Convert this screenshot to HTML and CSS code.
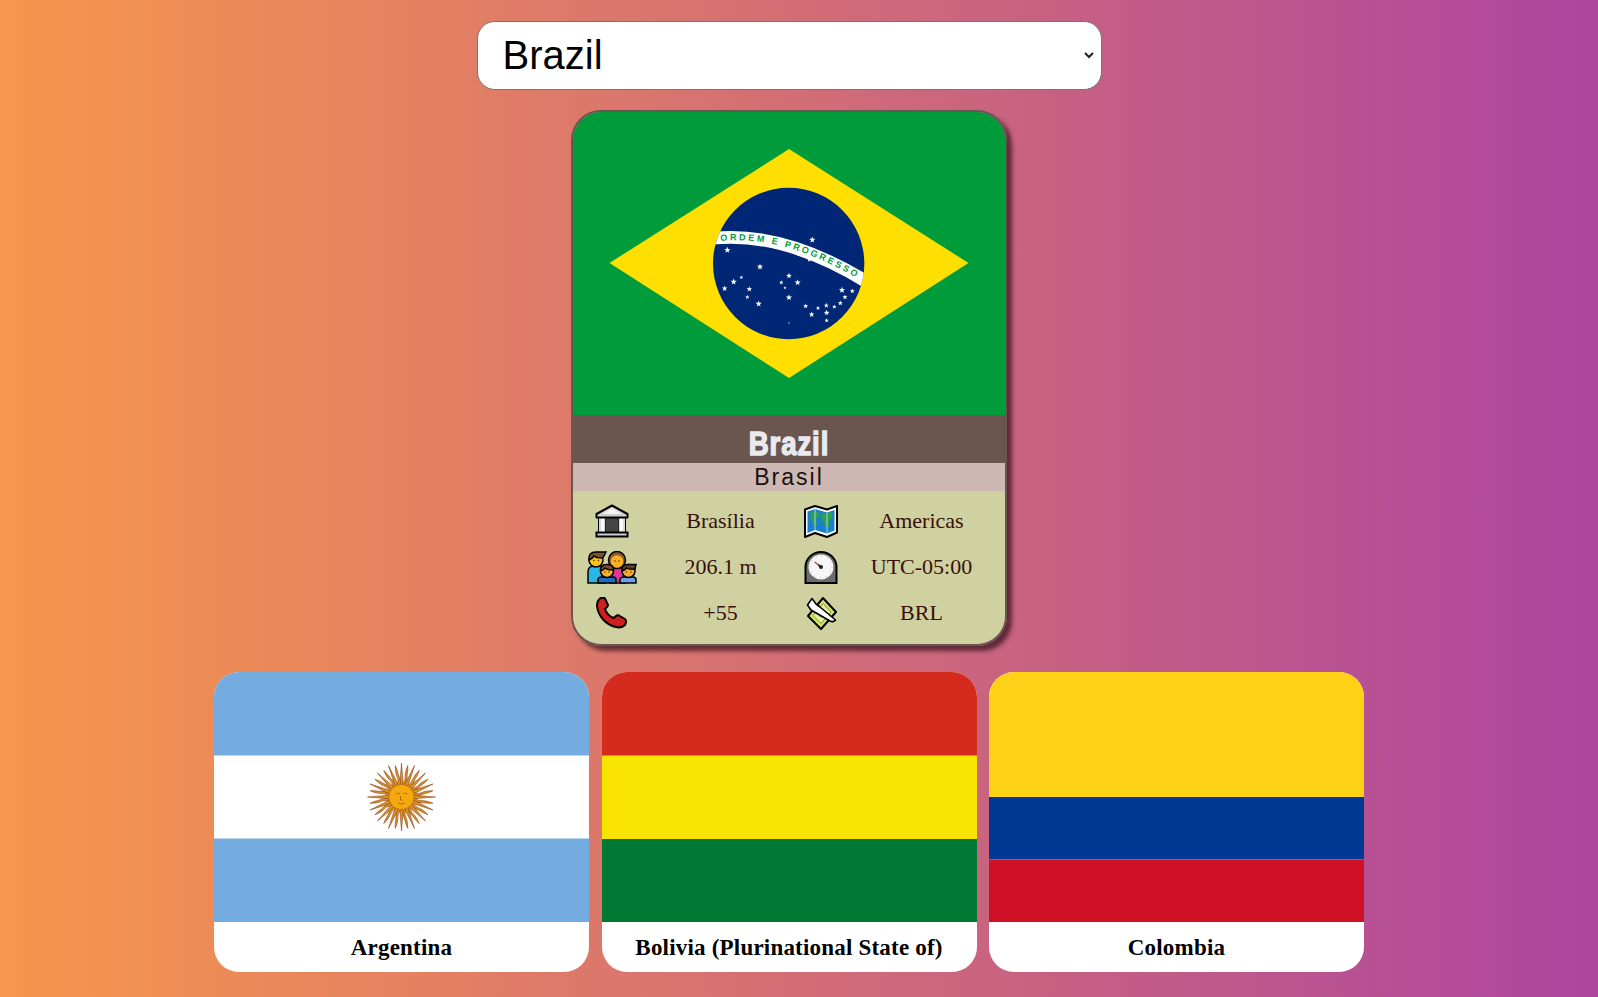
FILE: index.html
```html
<!DOCTYPE html>
<html lang="en">
<head>
    <meta charset="UTF-8" />
    <title>Countries</title>
    <link rel="stylesheet" href="styles.css">
</head>
<body>
<select class="picker">
    <option>Argentina</option>
    <option>Bolivia (Plurinational State of)</option>
    <option selected>Brazil</option>
    <option>Colombia</option>
</select>

<div class="country">
    <svg class="country-flag" viewBox="0 0 432 303">
        <defs>
            <clipPath id="globe"><circle cx="296" cy="279" r="227" /></clipPath>
            <polygon id="star" points="0,-1 .24,-.32 .95,-.31 .38,.12 .59,.81 0,.4 -.59,.81 -.38,.12 -.95,-.31 -.24,-.32" fill="#fff" />
            <path id="band-text" d="M80 213 Q281 187 524 337" />
        </defs>
        <rect width="432" height="303" fill="#009b3a" />
        <polygon points="36.5,151 216,37 395.5,151 216,266" fill="#fedf00" />
        <g transform="translate(117 58.5) scale(.3333)">
            <circle cx="296" cy="279" r="227" fill="#002776" />
            <path d="M60 204 Q281 178 540 340" clip-path="url(#globe)" fill="none" stroke="#fff" stroke-width="38" />
            <text class="motto"><textPath href="#band-text" startOffset="12">ORDEM E PROGRESSO</textPath></text>
            <use href="#star" transform="translate(367 208) scale(10)" />
            <use href="#star" transform="translate(112 239) scale(10)" />
            <use href="#star" transform="translate(358 268) scale(7)" />
            <use href="#star" transform="translate(210 289) scale(10)" />
            <use href="#star" transform="translate(154 321) scale(6)" />
            <use href="#star" transform="translate(131 334) scale(10)" />
            <use href="#star" transform="translate(104 354) scale(9)" />
            <use href="#star" transform="translate(178 356) scale(9)" />
            <use href="#star" transform="translate(172 380) scale(7)" />
            <use href="#star" transform="translate(206 400) scale(10)" />
            <use href="#star" transform="translate(297 316) scale(9)" />
            <use href="#star" transform="translate(274 336) scale(7)" />
            <use href="#star" transform="translate(323 336) scale(10)" />
            <use href="#star" transform="translate(285 352) scale(5)" />
            <use href="#star" transform="translate(297 381) scale(10)" />
            <use href="#star" transform="translate(347 407) scale(8)" />
            <use href="#star" transform="translate(384 413) scale(7)" />
            <use href="#star" transform="translate(409 405) scale(8)" />
            <use href="#star" transform="translate(433 409) scale(7)" />
            <use href="#star" transform="translate(451 398) scale(8)" />
            <use href="#star" transform="translate(456 359) scale(10)" />
            <use href="#star" transform="translate(487 362) scale(8)" />
            <use href="#star" transform="translate(465 380) scale(8)" />
            <use href="#star" transform="translate(365 432) scale(9)" />
            <use href="#star" transform="translate(410 427) scale(9)" />
            <use href="#star" transform="translate(410 450) scale(7)" />
            <use href="#star" transform="translate(297 458) scale(3)" />
        </g>
    </svg>
    <div class="country-name"><span class="country-name-text">Brazil</span></div>
    <div class="country-native">Brasil</div>
    <div class="stats">
        <!-- capital -->
        <svg class="icon" width="34" height="34" viewBox="0 0 34 34">
            <rect x="3.5" y="13" width="27" height="16" fill="#d9d9d9" stroke="#000" stroke-width="1" />
            <rect x="11" y="14" width="12" height="15" fill="#444" />
            <path d="M7.5 14 V29 M26.5 14 V29" stroke="#fff" stroke-width="2.5" />
            <path d="M10.5 14 V29 M23.5 14 V29" stroke="#222" stroke-width="1" />
            <polygon points="17,1.5 32.5,10 32.5,13.5 1.5,13.5 1.5,10" fill="#cfcfcf" stroke="#000" stroke-width="2" stroke-linejoin="round" />
            <path d="M17 4 L27 10 H7 Z" fill="#f2f2f2" />
            <rect x="1.5" y="28.5" width="31" height="4" fill="#d0d0d0" stroke="#000" stroke-width="2" />
        </svg>
        <div class="stat">Brasília</div>
        <!-- region -->
        <svg class="icon" width="34" height="33" viewBox="0 0 34 33">
            <path d="M1 4.5 L11 1 L23 4.5 L33 1 V27.5 L23 32 L11 28 L1 32 Z" fill="#fff" stroke="#000" stroke-width="2" stroke-linejoin="round" />
            <path d="M3.5 6.5 L11 4 L23 7.5 L30.5 5 V25.5 L23 28.5 L11 25 L3.5 28 Z" fill="#1a80cc" />
            <path d="M6 8 L13 6 L16 10 L12 14 L13 21 L9 20 L7 13 Z M18 9 L27 7 L29 13 L25 15 L25 23 L21 21 L18 14 Z" fill="#2fa24a" />
            <path d="M11 4 V25 M23 7.5 V28.5" stroke="#9fd0ee" stroke-width="1" />
        </svg>
        <div class="stat">Americas</div>
        <!-- population -->
        <svg class="icon" width="50" height="33" viewBox="0 0 50 33">
            <g stroke="#000" stroke-width="1.5">
                <path d="M1 32 V21 Q1 15 7 15 H14 Q18 15 18 21 V32 Z" fill="#29b6e6" />
                <circle cx="9" cy="9" r="7" fill="#fcc21b" />
                <path d="M2 9 Q1 1 9 1 H19 L17 5 Q16 7 15 7 Q9 7 7 5 Q5 8 2 9 Z" fill="#7a5230" />
                <path d="M23 32 V21 Q23 16 27 16 H34 Q38 16 38 21 V32 Z" fill="#e0359a" />
                <circle cx="30" cy="9" r="8.5" fill="#8a5a2e" />
                <circle cx="30" cy="10.5" r="6.2" fill="#fbb021" stroke="none" />
                <path d="M11 32 V29 Q11 26 15 26 H26 Q29 26 29 29 V32 Z" fill="#1c6fc0" />
                <circle cx="20" cy="20" r="6.5" fill="#fbb428" />
                <path d="M13.5 20 Q13 13.5 20 13.5 Q27 13.5 26.5 19 Q20 19 18 17 Q17 19 13.5 20 Z" fill="#7a5230" />
                <path d="M33 32 V29 Q33 26 37 26 H46 Q49 26 49 29 V32 Z" fill="#6da0e8" />
                <circle cx="41.5" cy="20" r="6.5" fill="#fbae25" />
                <path d="M35 20 Q34 13.5 41 13.5 H49 L48 18 Q42 19 39.5 17 Q38 19 35 20 Z" fill="#5d4127" />
            </g>
            <path d="M7 9.5 h.01 M11.5 9.5 h.01 M28 10 h.01 M32 10 h.01 M18 21 h.01 M22 21 h.01 M39.5 21 h.01 M44 21 h.01" stroke="#3a2412" stroke-width="1.4" stroke-linecap="round" />
        </svg>
        <div class="stat">206.1 m</div>
        <!-- timezone -->
        <svg class="icon" width="34" height="33" viewBox="0 0 34 33">
            <path d="M1.5 32 V16 A15.5 15 0 0 1 32.5 16 V32 Z" fill="#6d6d6d" stroke="#000" stroke-width="2" />
            <circle cx="17" cy="16" r="12.5" fill="#f7f7f7" />
            <circle cx="17" cy="16" r="11" fill="none" stroke="#aaa" stroke-width="1" stroke-dasharray="1 4.76" />
            <path d="M10.6 11 L14 13.5" stroke="#d0402a" stroke-width="1.4" />
            <path d="M14 13.5 L17 16" stroke="#333" stroke-width="1.8" />
            <circle cx="17" cy="16" r="2" fill="#222" />
        </svg>
        <div class="stat">UTC-05:00</div>
        <!-- calling code -->
        <svg class="icon" width="32" height="32" viewBox="0 0 32 32">
            <path d="M4 1.5 C6 0.5 8 0.5 9 1.5 L12 8 C12 10 10 11 9 12 C10 16 14 20 18 21 C19 20 20 18 22 18 L29 22 C31 24 30 26 29 28 C27 30 24 31 20 30 C10 28 2 19 1 9 C1 6 2 3 4 1.5 Z" fill="#cf1f1e" stroke="#000" stroke-width="2" stroke-linejoin="round" />
        </svg>
        <div class="stat">+55</div>
        <!-- currency -->
        <svg class="icon" width="31" height="33" viewBox="0 0 31 33">
            <polygon points="17,1 30,15 15,32 2,19" fill="#d5e36b" stroke="#000" stroke-width="2" stroke-linejoin="round" />
            <polygon points="17,6.5 25,15 15,26.5 7,18.5" fill="#e6ee9f" stroke="#7f8f30" stroke-width="1" />
            <circle cx="16" cy="16.5" r="3.5" fill="#d5e36b" stroke="#7f8f30" stroke-width="1" />
            <path d="M1.5 8 L6 1.5 L10 7 L14 10 L29.5 23 Q27.5 25.5 24 24 L12 17 L5 13 Z" fill="#fff" stroke="#000" stroke-width="1.6" stroke-linejoin="round" />
        </svg>
        <div class="stat">BRL</div>
    </div>
</div>

<div class="neighbours">
    <div class="neighbour">
        <svg class="neighbour-flag" viewBox="0 0 375 250">
            <defs>
                <g id="ray-pair">
                    <path d="M-1.8 -12 L0 -34 L1.8 -12 Z" fill="#d8922a" stroke="#85340a" stroke-width=".5" />
                    <path transform="rotate(11.25)" d="M-1.6 -12 Q1 -18 -.8 -23 Q-1.2 -27 0 -32 Q1.4 -27 1.2 -23 Q2.8 -18 1.6 -12 Z" fill="#d8922a" stroke="#85340a" stroke-width=".5" />
                </g>
                <g id="ray-2"><use href="#ray-pair" /><use href="#ray-pair" transform="rotate(22.5)" /></g>
                <g id="ray-4"><use href="#ray-2" /><use href="#ray-2" transform="rotate(45)" /></g>
                <g id="ray-8"><use href="#ray-4" /><use href="#ray-4" transform="rotate(90)" /></g>
            </defs>
            <rect width="375" height="250" fill="#74acdf" />
            <rect y="83.5" width="375" height="83" fill="#fff" />
            <g transform="translate(187.5 125)">
                <use href="#ray-8" />
                <use href="#ray-8" transform="rotate(180)" />
                <circle r="12.5" fill="#f6a90e" stroke="#b5761a" stroke-width=".6" />
                <path d="M-6 -3 Q-3.5 -5 -1.5 -3 M1.5 -3 Q3.5 -5 6 -3 M-1 -1 L-1 3 L1 3 M-3.5 6 Q0 8 3.5 6" fill="none" stroke="#a8660f" stroke-width=".9" />
            </g>
        </svg>
        <div class="neighbour-name">Argentina</div>
    </div>
    <div class="neighbour">
        <svg class="neighbour-flag" viewBox="0 0 375 250">
            <rect width="375" height="84" fill="#d52b1e" />
            <rect y="83.5" width="375" height="84" fill="#f9e300" />
            <rect y="167" width="375" height="83" fill="#007934" />
        </svg>
        <div class="neighbour-name">Bolivia (Plurinational State of)</div>
    </div>
    <div class="neighbour">
        <svg class="neighbour-flag" viewBox="0 0 375 250">
            <rect width="375" height="125" fill="#fcd116" />
            <rect y="125" width="375" height="62.5" fill="#003893" />
            <rect y="187.5" width="375" height="62.5" fill="#ce1126" />
        </svg>
        <div class="neighbour-name">Colombia</div>
    </div>
</div>
</body>
</html>
```

FILE: styles.css
```css
html {
  height: 100%;
}
body {
  margin: 0;
  padding: 21px 20px 25px 0;
  min-height: 100%;
  box-sizing: border-box;
  background: linear-gradient(to right, #f7964c, #ad459f);
  display: flex;
  flex-direction: column;
  align-items: center;
  font-family: "Liberation Serif", "Times New Roman", serif;
}
.picker {
  appearance: none;
  width: 625px;
  height: 69px;
  padding: 0 25px 2px;
  font-family: "Liberation Sans", Arial, sans-serif;
  font-size: 40px;
  color: #000;
  background: white url("data:image/svg+xml,%3Csvg xmlns='http://www.w3.org/2000/svg' width='10' height='7'%3E%3Cpath d='M1 1 L5 5 L9 1' fill='none' stroke='%23222' stroke-width='2'/%3E%3C/svg%3E") no-repeat right 7px center;
  border: 1px solid #767676;
  border-radius: 18px;
}
.country {
  width: 432px;
  margin-top: 20px;
  border: 2px solid #6b564f;
  border-radius: 30px;
  overflow: hidden;
  box-shadow: 5px 5px 4px rgba(40, 10, 20, 0.65);
}
.country-flag {
  display: block;
  width: 432px;
  height: 303px;
}
.motto {
  font-family: "Liberation Sans", Arial, sans-serif;
  font-size: 27px;
  font-weight: bold;
  letter-spacing: 7.4px;
  fill: #009b3a;
}
.country-name {
  height: 48px;
  box-sizing: border-box;
  padding-top: 10px;
  background: #6b564f;
  color: #e8eaf0;
  text-align: center;
  font-family: "Liberation Sans", Arial, sans-serif;
  font-size: 33px;
  line-height: 38px;
  font-weight: bold;
  letter-spacing: 1px;
  -webkit-text-stroke: 1.4px #e8eaf0;
}
.country-name-text {
  display: inline-block;
  transform: scaleX(0.84);
}
.country-native {
  height: 28px;
  background: #cdb8b3;
  color: #1a1210;
  text-align: center;
  font-family: "Liberation Sans", Arial, sans-serif;
  font-size: 23px;
  line-height: 28px;
  letter-spacing: 2px;
}
.stats {
  display: grid;
  grid-template-columns: 78px 139px 62px 139px;
  grid-auto-rows: 46px;
  padding: 7px 14px 8px 0;
  background: #cfd1a1;
  color: #3a0f0a;
}
.icon {
  place-self: center;
}
.stat {
  font-size: 22px;
  text-align: center;
  align-self: center;
}
.neighbours {
  display: flex;
  gap: 12.5px;
  margin-top: 26px;
}
.neighbour {
  width: 375px;
  border-radius: 25px;
  overflow: hidden;
  background: white;
}
.neighbour-flag {
  display: block;
  width: 375px;
  height: 250px;
}
.neighbour-name {
  height: 50px;
  text-align: center;
  color: #000;
  font-size: 23px;
  font-weight: bold;
  line-height: 52px;
  letter-spacing: 0.2px;
}
```
